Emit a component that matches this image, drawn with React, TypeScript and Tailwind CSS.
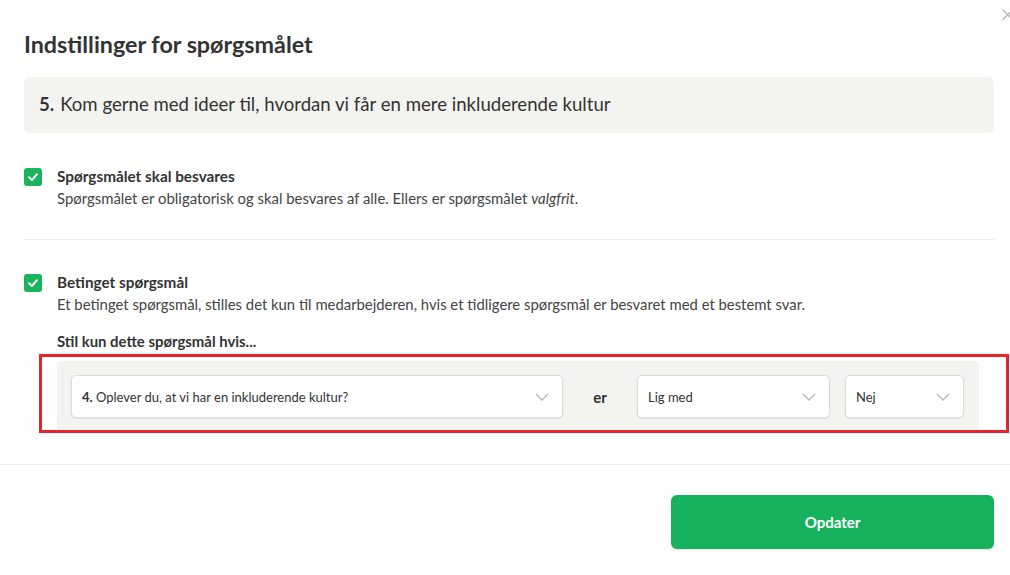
import React from "react";

function Check() {
  return (
    <div className="mt-[3px] flex h-[18px] w-[18px] shrink-0 items-center justify-center rounded-[3px] bg-[#1bb35c]">
      <svg width="14" height="14" viewBox="0 0 14 14" fill="none">
        <path d="M3 7.3 L5.9 10 L11 4.2" stroke="white" strokeWidth="2" strokeLinecap="round" strokeLinejoin="round" />
      </svg>
    </div>
  );
}

function Chevron() {
  return (
    <svg width="14" height="8" viewBox="0 0 14 8" fill="none" className="shrink-0">
      <path d="M1 1 L7 7 L13 1" stroke="#b5b5b5" strokeWidth="1.3" />
    </svg>
  );
}

function Select({ width, children }: { width: string; children: React.ReactNode }) {
  return (
    <div
      className={`flex h-[43px] ${width} items-center justify-between rounded-[5px] border border-[#dcdcdc] bg-white pl-[10px] pr-[13px] text-[13px] text-[#333] shadow-[0_1px_2px_rgba(0,0,0,0.08)]`}
    >
      <span className="truncate">{children}</span>
      <Chevron />
    </div>
  );
}

export default function App() {
  return (
    <div className="relative h-[575px] w-[1010px] overflow-hidden bg-white font-['Lato',sans-serif] text-[#333]">
      <svg className="absolute left-[1002px] top-[9px]" width="14" height="12" viewBox="0 0 14 12" fill="none">
        <path d="M0.5 0.5 L11 11 M11 0.5 L0.5 11" stroke="#b8b8b8" strokeWidth="1.4" />
      </svg>

      <div className="pl-6 pr-4 pt-[29px]">
        <h2 className="text-[23.3px] font-bold leading-[30px] text-[#333]">Indstillinger for spørgsmålet</h2>

        <div className="mt-[18px] flex h-[56px] items-center rounded-[6px] bg-[#f3f3f0] px-[15px] text-[18.6px] text-[#333]">
          <span className="mr-[6px] font-bold">5.</span>
          <span>Kom gerne med ideer til, hvordan vi får en mere inkluderende kultur</span>
        </div>

        <div className="mt-[32px] flex items-start gap-[15px]">
          <Check />
          <div className="text-[14.9px] leading-[22px]">
            <div className="text-[15.3px] font-bold text-[#333]">Spørgsmålet skal besvares</div>
            <div className="text-[#444]">
              Spørgsmålet er obligatorisk og skal besvares af alle. Ellers er spørgsmålet <i>valgfrit</i>.
            </div>
          </div>
        </div>

        <div className="mt-[30px] h-px bg-[#e8e8e8]" />

        <div className="mt-[31px] flex items-start gap-[15px]">
          <Check />
          <div className="text-[14.9px] leading-[22px]">
            <div className="text-[15.3px] font-bold text-[#333]">Betinget spørgsmål</div>
            <div className="text-[14.85px] text-[#444]">
              Et betinget spørgsmål, stilles det kun til medarbejderen, hvis et tidligere spørgsmål er besvaret med et bestemt svar.
            </div>
            <div className="mt-[15px] font-bold text-[#333]">Stil kun dette spørgsmål hvis...</div>
            <div className="mt-[9px] flex h-[72px] w-[922px] items-start rounded-[5px] bg-[#f3f3f0] px-[14px] pt-[14px]">
              <Select width="w-[492px]">
                <span className="font-bold">4.</span> Oplever du, at vi har en inkluderende kultur?
              </Select>
              <div className="flex h-[43px] w-[74px] items-center justify-center text-[15px] font-bold text-[#333]">er</div>
              <Select width="w-[193px]">Lig med</Select>
              <div className="w-[15px]" />
              <Select width="w-[119px]">Nej</Select>
            </div>
          </div>
        </div>
      </div>

      <div className="mt-[31px] h-px bg-[#e8e8e8]" />

      <div className="flex justify-end pl-6 pr-4 pt-[30px]">
        <button className="flex h-[54px] w-[323px] items-center justify-center rounded-[6px] bg-[#17b25e] text-[15px] font-bold text-white shadow-[0_1px_2px_rgba(0,0,0,0.12)]">
          Opdater
        </button>
      </div>

      <div className="pointer-events-none absolute left-[39px] top-[354px] h-[79px] w-[970px] border-[3px] border-[#e8232a]" />
    </div>
  );
}
